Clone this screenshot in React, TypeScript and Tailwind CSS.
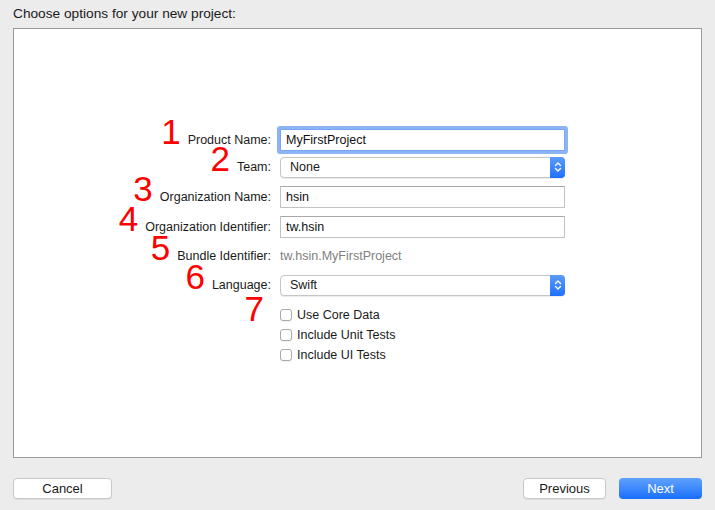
import React from 'react';

const RedNum: React.FC<{ n: string }> = ({ n }) => (
  <span className="text-[35px] leading-[0] text-[#ff0000] mr-[7px] align-baseline">{n}</span>
);

interface RowProps {
  label: string;
  num?: string;
  className?: string;
  children: React.ReactNode;
}

const Row: React.FC<RowProps> = ({ label, num, className = '', children }) => (
  <div className={`flex items-center ${className}`}>
    <div className="w-[266px] pr-[9px] text-right text-[12.5px] leading-[22px] text-[#1a1a1a] whitespace-nowrap">
      {num && <RedNum n={num} />}
      {label}
    </div>
    <div className="w-[285px]">{children}</div>
  </div>
);

const UpDown = () => (
  <div className="w-[15px] self-stretch -my-px -mr-px rounded-r-[4px] bg-gradient-to-b from-[#5c9bfb] to-[#1c6ffd] flex items-center justify-center">
    <svg width="8" height="12" viewBox="0 0 8 12" fill="none" stroke="white" strokeWidth="1.4" strokeLinecap="round" strokeLinejoin="round">
      <path d="M1.5 4.5 L4 2 L6.5 4.5" />
      <path d="M1.5 7.5 L4 10 L6.5 7.5" />
    </svg>
  </div>
);

const Popup: React.FC<{ value: string }> = ({ value }) => (
  <div className="h-[21px] flex items-center bg-white border border-[#c6c6c6] rounded-[4px] shadow-[0_1px_0_rgba(0,0,0,0.08)]">
    <span className="flex-1 pl-[9px] text-[12.5px] text-[#1a1a1a]">{value}</span>
    <UpDown />
  </div>
);

const TextInput: React.FC<{ value: string; focused?: boolean }> = ({ value, focused }) => (
  <div
    className={`h-[22px] flex items-center bg-white border pl-[5px] text-[12.5px] text-[#111] ${
      focused
        ? 'border-[#7aa5f0] ring-[3px] ring-[#8cb4f7] rounded-[1px]'
        : 'border-[#c2c2c2] border-t-[#a9a9a9]'
    }`}
  >
    {value}
  </div>
);

const Check: React.FC<{ label: string }> = ({ label }) => (
  <div className="h-[20px] flex items-center gap-[5px] text-[12.5px] text-[#1a1a1a]">
    <div className="w-[12px] h-[12px] rounded-[3px] bg-white border border-[#a9a9a9] shadow-[0_1px_0_rgba(0,0,0,0.05)]" />
    {label}
  </div>
);

export default function App() {
  return (
    <div
      className="w-[715px] h-[510px] bg-[#ececec] flex flex-col overflow-hidden"
      style={{ fontFamily: '"Liberation Sans", Arial, sans-serif' }}
    >
      {/* Header */}
      <div className="h-[28px] pl-[13px] pt-[4px] text-[13.7px] text-[#1a1a1a]">
        Choose options for your new project:
      </div>

      {/* Panel */}
      <div className="mx-[13px] h-[430px] bg-white border border-[#9b9b9b] pt-[100px]">
        <Row label="Product Name:" num="1">
          <TextInput value="MyFirstProject" focused />
        </Row>
        <Row label="Team:" num="2" className="mt-[5px]">
          <Popup value="None" />
        </Row>
        <Row label="Organization Name:" num="3" className="mt-[8px]">
          <TextInput value="hsin" />
        </Row>
        <Row label="Organization Identifier:" num="4" className="mt-[8px]">
          <TextInput value="tw.hsin" />
        </Row>
        <Row label="Bundle Identifier:" num="5" className="mt-[7px]">
          <div className="text-[12.5px] leading-[22px] text-[#7f7f7f]">tw.hsin.MyFirstProject</div>
        </Row>
        <Row label="Language:" num="6" className="mt-[7px]">
          <Popup value="Swift" />
        </Row>
        <div className="flex mt-[9px]">
          <div className="w-[266px] pr-[9px] text-right leading-[22px]">
            <RedNum n="7" />
          </div>
          <div className="flex flex-col">
            <Check label="Use Core Data" />
            <Check label="Include Unit Tests" />
            <Check label="Include UI Tests" />
          </div>
        </div>
      </div>

      {/* Footer */}
      <div className="flex justify-between items-center px-[13px] mt-[20px]">
        <button className="w-[99px] h-[21px] bg-white border border-[#c8c8c8] rounded-[4px] text-[13px] text-[#1a1a1a] shadow-[0_1px_0_rgba(0,0,0,0.06)]">
          Cancel
        </button>
        <div className="flex gap-[13px]">
          <button className="w-[83px] h-[21px] bg-white border border-[#c8c8c8] rounded-[4px] text-[13px] text-[#1a1a1a] shadow-[0_1px_0_rgba(0,0,0,0.06)]">
            Previous
          </button>
          <button className="w-[83px] h-[21px] rounded-[4px] bg-gradient-to-b from-[#5fa2fc] to-[#176dfd] text-[13px] text-white">
            Next
          </button>
        </div>
      </div>
    </div>
  );
}
